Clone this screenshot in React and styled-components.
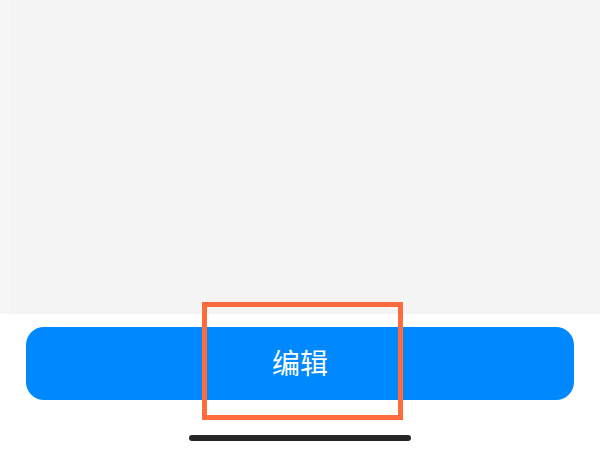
import React from 'react';
import styled, { createGlobalStyle } from 'styled-components';

const GlobalStyle = createGlobalStyle`
  html, body {
    margin: 0;
    padding: 0;
    background: #ffffff;
  }
  body {
    font-family: "Noto Sans CJK SC", "Noto Sans", sans-serif;
  }
`;

const Screen = styled.div`
  position: relative;
  width: 600px;
  height: 450px;
  display: flex;
  flex-direction: column;
  overflow: hidden;
  background: #ffffff;
`;

const ContentArea = styled.div`
  height: 314px;
  display: flex;
  background: #f4f4f4;
`;

const EdgeStrip = styled.div`
  width: 10px;
  background: #f6f6f6;
`;

const Footer = styled.div`
  display: flex;
  flex-direction: column;
  align-items: center;
  padding: 13px 26px 0 26px;
`;

const PrimaryButton = styled.button`
  width: 100%;
  height: 73px;
  padding: 0 0 4px 0;
  border: none;
  border-radius: 18px;
  background: #0088ff;
  color: #ffffff;
  font-family: "Noto Sans CJK SC", "Noto Sans", sans-serif;
  font-size: 28px;
  display: flex;
  align-items: center;
  justify-content: center;
  cursor: pointer;
`;

const HomeIndicator = styled.div`
  width: 222px;
  height: 6px;
  margin-top: 35px;
  border-radius: 3px;
  background: #262626;
`;

// annotation frame laid over the button
const Highlight = styled.div`
  position: absolute;
  left: 202px;
  top: 302px;
  width: 201px;
  height: 118px;
  box-sizing: border-box;
  border: 5px solid #ff6b3c;
  pointer-events: none;
`;

const App = () => {
  return (
    <>
      <GlobalStyle />
      <Screen>
        <ContentArea>
          <EdgeStrip />
        </ContentArea>
        <Footer>
          <PrimaryButton>编辑</PrimaryButton>
          <HomeIndicator />
        </Footer>
        <Highlight />
      </Screen>
    </>
  );
};

export default App;
